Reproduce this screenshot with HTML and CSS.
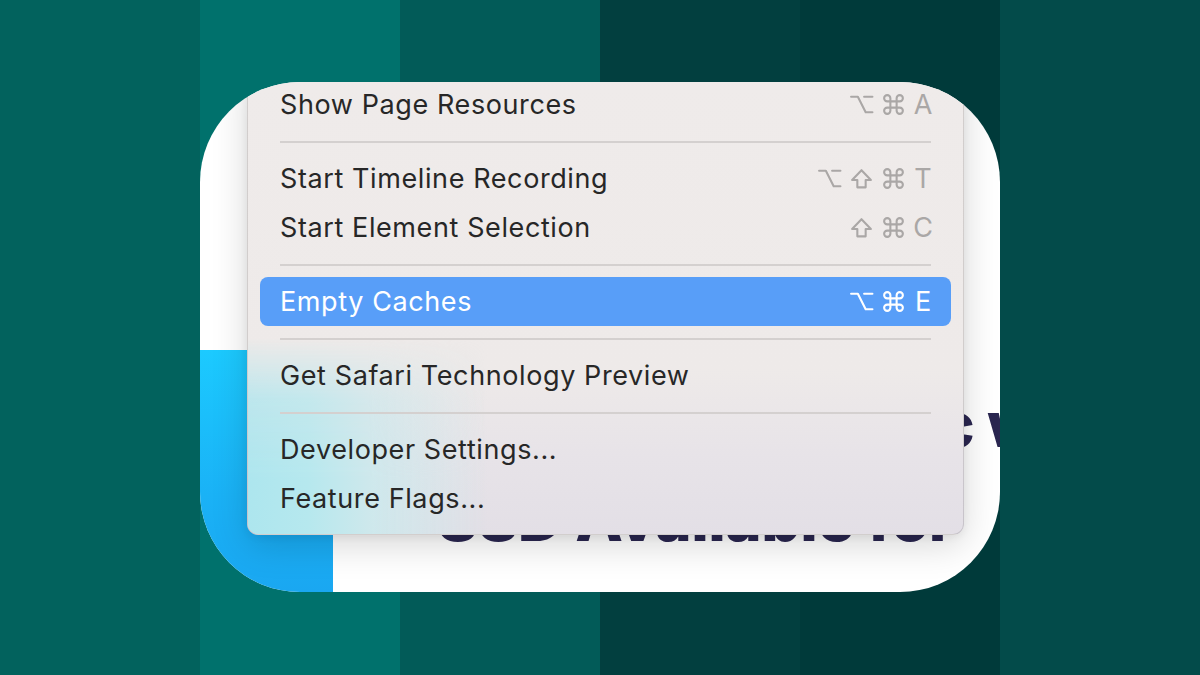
FILE: index.html
```html
<!DOCTYPE html>
<html>
<head>
<meta charset="utf-8">
<link rel="stylesheet" href="styles.css">
</head>
<body>
<svg width="0" height="0" class="defs">
  <defs>
    <symbol id="opt" viewBox="0 0 24 24"><path d="M2 4.5h6.5l7.5 15h6.5M14.5 4.5h8"/></symbol>
    <symbol id="shift" viewBox="0 0 24 24"><path d="M8 20.5v-7H3L12 4l9 9.5h-5v7z"/></symbol>
    <symbol id="cmd" viewBox="0 0 24 24"><path d="M15 6v12a3 3 0 1 0 3-3H6a3 3 0 1 0 3 3V6a3 3 0 1 0-3 3h12a3 3 0 1 0-3-3"/></symbol>
  </defs>
</svg>
<div class="stage">
  <div class="card">
    <div class="content">
      <div class="blue"></div>
      <div class="headline">
        <div class="line1">The Fastest Mac with</div>
        <div class="line2">SSD Available for</div>
      </div>
    </div>
    <div class="menu">
      <div class="item"><span class="label">Show Page Resources</span><span class="keys"><svg class="k"><use href="#opt"/></svg><svg class="k"><use href="#cmd"/></svg><span class="letter">A</span></span></div>
      <div class="sep"></div>
      <div class="item"><span class="label">Start Timeline Recording</span><span class="keys"><svg class="k"><use href="#opt"/></svg><svg class="k"><use href="#shift"/></svg><svg class="k"><use href="#cmd"/></svg><span class="letter">T</span></span></div>
      <div class="item"><span class="label">Start Element Selection</span><span class="keys"><svg class="k"><use href="#shift"/></svg><svg class="k"><use href="#cmd"/></svg><span class="letter">C</span></span></div>
      <div class="sep"></div>
      <div class="item active"><span class="label">Empty Caches</span><span class="keys"><svg class="k"><use href="#opt"/></svg><svg class="k"><use href="#cmd"/></svg><span class="letter">E</span></span></div>
      <div class="sep"></div>
      <div class="item"><span class="label">Get Safari Technology Preview</span></div>
      <div class="sep"></div>
      <div class="item"><span class="label">Developer Settings...</span></div>
      <div class="item"><span class="label">Feature Flags...</span></div>
    </div>
  </div>
</div>
</body>
</html>
```

FILE: styles.css
```css
html, body {
  margin: 0;
  padding: 0;
}
body {
  width: 1200px;
  height: 675px;
  overflow: hidden;
  background: linear-gradient(90deg,
    #02625d 0, #02625d 200px,
    #00716c 200px, #00716c 400px,
    #025b58 400px, #025b58 600px,
    #023f3f 600px, #023f3f 800px,
    #003a3a 800px, #003a3a 1000px,
    #034b4a 1000px, #034b4a 1200px);
  font-family: Inter, "Noto Sans", sans-serif;
}
.defs {
  position: absolute;
}
.stage {
  padding-top: 82px;
  padding-left: 200px;
}
.card {
  position: relative;
  width: 800px;
  height: 510px;
  border-radius: 100px;
  background: #ffffff;
  overflow: hidden;
}
.content {
  display: flex;
  height: 100%;
}
.blue {
  flex: 0 0 133px;
  margin-top: 268px;
  background: linear-gradient(180deg, #1ccaff 0%, #1ab2f6 60%, #1aa7f1 100%);
}
.headline {
  padding-left: 104px;
  padding-top: 296px;
  color: #2a2650;
  font-weight: 800;
  font-size: 62px;
  line-height: 94px;
  white-space: nowrap;
  letter-spacing: -0.5px;
}
.line1 {
  margin-left: 40px;
}
.menu {
  position: absolute;
  left: 47px;
  top: -14px;
  box-sizing: border-box;
  width: 717px;
  padding: 11px 12px;
  background: linear-gradient(180deg, #efebea 0, #eeeae9 300px, #e7e3e8 390px, #e3dfe6 100%);
  border: 1px solid rgba(0, 0, 0, 0.12);
  border-radius: 11px;
  box-shadow: 0 10px 36px rgba(0, 0, 0, 0.16), 0 2px 8px rgba(0, 0, 0, 0.06);
  color: #272727;
  overflow: hidden;
  isolation: isolate;
}
.menu::before {
  content: "";
  position: absolute;
  left: 0;
  right: 0;
  top: 270px;
  bottom: 0;
  z-index: -1;
  background: linear-gradient(90deg, #ade6ee 0, #b6e8ee 60px, #cde8ec 120px, rgba(227, 223, 230, 0) 240px);
  -webkit-mask-image: linear-gradient(180deg, transparent 0, rgba(0,0,0,0.75) 60px, #000 140px);
  mask-image: linear-gradient(180deg, transparent 0, rgba(0,0,0,0.75) 60px, #000 140px);
}
.item {
  height: 49px;
  display: flex;
  align-items: center;
  justify-content: space-between;
  padding: 0 18px 0 20px;
  border-radius: 8px;
  font-size: 27px;
  letter-spacing: 0.6px;
}
.item.active {
  background: #589ef8;
  color: #ffffff;
}
.keys {
  display: flex;
  align-items: center;
  gap: 7px;
  color: #aaa7a6;
}
.k {
  width: 25px;
  height: 25px;
  fill: none;
  stroke: currentColor;
  stroke-width: 2;
  stroke-linejoin: round;
  stroke-linecap: round;
}
.letter {
  font-size: 27px;
  font-weight: 400;
  letter-spacing: 0;
  min-width: 20px;
  text-align: center;
}
.item.active .keys {
  color: #ffffff;
}
.sep {
  height: 25px;
  display: flex;
  align-items: center;
  padding: 0 20px;
}
.sep::before {
  content: "";
  flex: 1;
  height: 2px;
  background: #d4d0cf;
}
```
